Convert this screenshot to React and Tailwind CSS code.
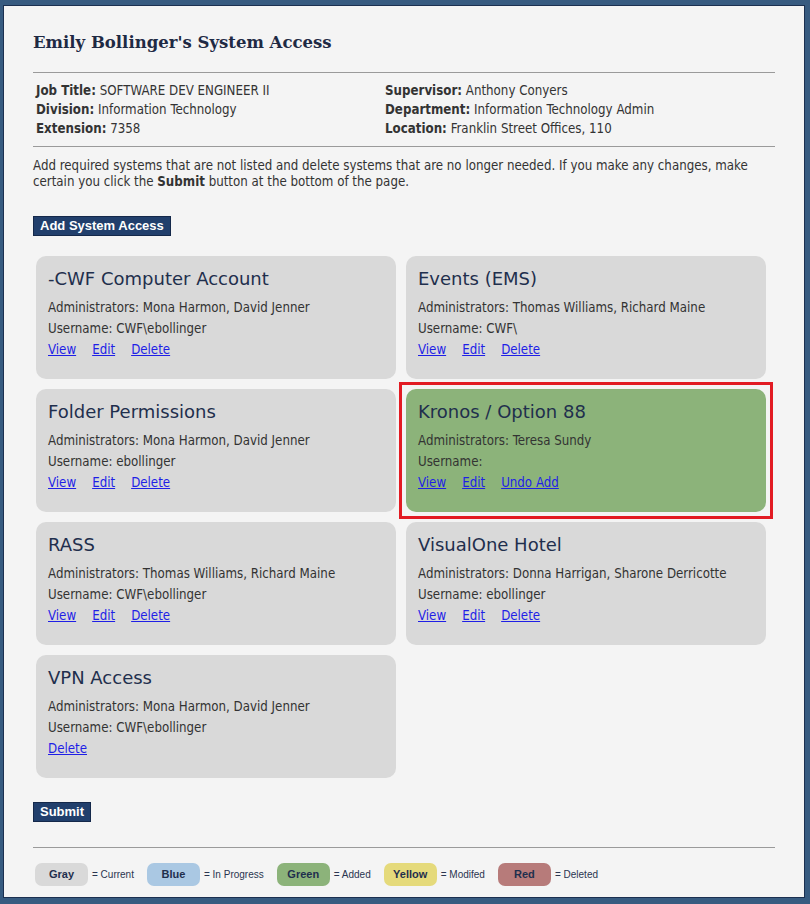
const systems = [
  {
    name: "-CWF Computer Account",
    admins: "Mona Harmon, David Jenner",
    username: "CWF\\ebollinger",
    links: ["View", "Edit", "Delete"],
  },
  {
    name: "Events (EMS)",
    admins: "Thomas Williams, Richard Maine",
    username: "CWF\\",
    links: ["View", "Edit", "Delete"],
  },
  {
    name: "Folder Permissions",
    admins: "Mona Harmon, David Jenner",
    username: "ebollinger",
    links: ["View", "Edit", "Delete"],
  },
  {
    name: "Kronos / Option 88",
    admins: "Teresa Sundy",
    username: "",
    links: ["View", "Edit", "Undo Add"],
    added: true,
  },
  {
    name: "RASS",
    admins: "Thomas Williams, Richard Maine",
    username: "CWF\\ebollinger",
    links: ["View", "Edit", "Delete"],
  },
  {
    name: "VisualOne Hotel",
    admins: "Donna Harrigan, Sharone Derricotte",
    username: "ebollinger",
    links: ["View", "Edit", "Delete"],
  },
  {
    name: "VPN Access",
    admins: "Mona Harmon, David Jenner",
    username: "CWF\\ebollinger",
    links: ["Delete"],
  },
];

const legend = [
  { label: "Gray", text: "= Current", color: "bg-[#d9d9d9]" },
  { label: "Blue", text: "= In Progress", color: "bg-[#aac8e3]" },
  { label: "Green", text: "= Added", color: "bg-[#8cb37a]" },
  { label: "Yellow", text: "= Modifed", color: "bg-[#e5da7b]" },
  { label: "Red", text: "= Deleted", color: "bg-[#b77b7a]" },
];

const SystemCard = ({ item }) => (
  <div className="relative">
    {/* highlight box drawn over the added card */}
    {item.added && <div className="absolute -inset-[7px] border-[3px] border-[#e21b23]" />}
    <div
      className={`relative h-[123px] rounded-[10px] px-[12px] pt-[11px] ${
        item.added ? "bg-[#8cb37a]" : "bg-[#d9d9d9]"
      }`}
    >
      <h3 className="text-[18px] leading-[24px] text-[#1f2f4d]">{item.name}</h3>
      <div className="mt-[6px] font-['DejaVu_Sans_Condensed','DejaVu_Sans',sans-serif] text-[13.2px] leading-[21px] text-[#333]">
        <p>Administrators: {item.admins}</p>
        <p>Username: {item.username}</p>
        <div className="flex gap-4">
          {item.links.map((l) => (
            <a key={l} href="#" className="text-[#1f1fe6] underline">
              {l}
            </a>
          ))}
        </div>
      </div>
    </div>
  </div>
);

const Info = ({ label, value }) => (
  <p>
    <b className="font-bold">{label}:</b> {value}
  </p>
);

export default function App() {
  return (
    <div className="h-[904px] bg-[#375b80] pt-[5px] pl-[3px] pr-[5px] pb-[6px] font-['DejaVu_Sans',sans-serif]">
      <div className="h-full border border-[#1b3050] bg-[#f4f4f4] px-[29px] pt-[26px]">
        <h1 className="font-['DejaVu_Serif',serif] text-[16.5px] leading-[22px] font-bold text-[#1f2a44]">
          Emily Bollinger's System Access
        </h1>

        <div className="mt-[18px] border-t border-[#9a9a9a]" />

        <div className="mt-[8px] grid grid-cols-[349px_1fr] pl-[3px] font-['DejaVu_Sans_Condensed','DejaVu_Sans',sans-serif] text-[13.2px] leading-[19px] text-[#333]">
          <Info label="Job Title" value="SOFTWARE DEV ENGINEER II" />
          <Info label="Supervisor" value="Anthony Conyers" />
          <Info label="Division" value="Information Technology" />
          <Info label="Department" value="Information Technology Admin" />
          <Info label="Extension" value="7358" />
          <Info label="Location" value="Franklin Street Offices, 110" />
        </div>

        <div className="mt-[8px] border-t border-[#9a9a9a]" />

        <p className="mt-[11px] font-['DejaVu_Sans_Condensed','DejaVu_Sans',sans-serif] text-[13.2px] leading-[16px] text-[#333]">
          Add required systems that are not listed and delete systems that are no longer needed. If you make any
          changes, make certain you click the <b className="font-bold">Submit</b> button at the bottom of the page.
        </p>

        <button className="mt-[26px] block h-[20px] border border-[#14284a] bg-[#213f6c] px-[6px] font-['Liberation_Sans',sans-serif] text-[13px] leading-[18px] font-bold text-white">
          Add System Access
        </button>

        <div className="mt-[20px] grid grid-cols-[360px_360px] gap-x-[10px] gap-y-[10px] pl-[3px]">
          {systems.map((s) => (
            <SystemCard key={s.name} item={s} />
          ))}
        </div>

        <button className="mt-[24px] block h-[20px] border border-[#14284a] bg-[#213f6c] px-[6px] font-['Liberation_Sans',sans-serif] text-[13px] leading-[18px] font-bold text-white">
          Submit
        </button>

        <div className="mt-[25px] border-t border-[#9a9a9a]" />

        <div className="mt-[15px] flex items-center pl-[2px]">
          {legend.map((l) => (
            <div key={l.label} className="mr-[13px] flex items-center">
              <span
                className={`flex h-[23px] w-[53px] items-center justify-center rounded-[7px] ${l.color} font-['Liberation_Sans',sans-serif] text-[11px] font-bold text-[#1f2f4d]`}
              >
                {l.label}
              </span>
              <span className="ml-[4px] font-['Liberation_Sans',sans-serif] text-[10px] text-[#2a3550]">
                {l.text}
              </span>
            </div>
          ))}
        </div>
      </div>
    </div>
  );
}
